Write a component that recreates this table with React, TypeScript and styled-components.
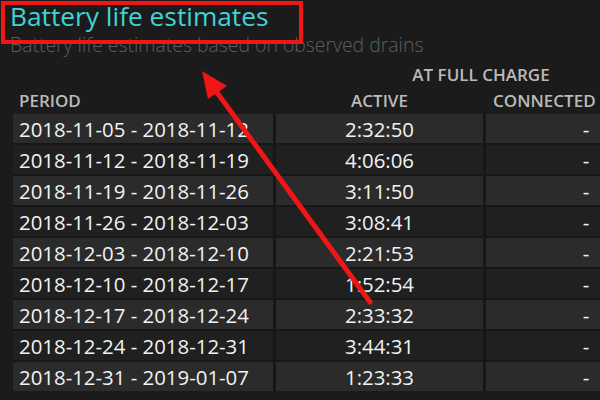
import React from "react";
import styled, { createGlobalStyle } from "styled-components";

const Global = createGlobalStyle`
  html, body { margin: 0; padding: 0; background: #1b1b1b; }
  body { width: 600px; height: 400px; overflow: hidden; font-family: "Open Sans", "Noto Sans", sans-serif; }
`;

const Page = styled.div`
  position: relative;
  width: 600px;
  height: 400px;
  overflow: hidden;
  background: #1b1b1b;
`;

const Title = styled.h1`
  margin: 0;
  padding-left: 10px;
  font-size: 26.3px;
  font-weight: 400;
  line-height: 32px;
  color: #3fd3d6;
  white-space: nowrap;
`;

const Subtitle = styled.div`
  margin-top: 2px;
  padding-left: 10px;
  font-size: 19.4px;
  font-weight: 300;
  line-height: 22px;
  color: #5e5e5e;
  white-space: nowrap;
`;

const Table = styled.div`
  margin-top: 6px;
  margin-left: 13px;
  display: grid;
  grid-template-columns: 260px 207px 200px;
  column-gap: 3px;
  width: 673px;
`;

const GroupHead = styled.div`
  grid-column: 2 / span 2;
  text-align: center;
  font-size: 17px;
  font-weight: 600;
  line-height: 26px;
  color: #bababa;
  white-space: nowrap;
`;

const Head = styled.div<{ $align: "left" | "center"; $pad?: number }>`
  text-align: ${(p) => p.$align};
  padding-left: ${(p) => p.$pad ?? 0}px;
  font-size: 17px;
  font-weight: 600;
  line-height: 26px;
  color: #bababa;
  white-space: nowrap;
`;

const Spacer = styled.div``;

const Body = styled.div`
  grid-column: 1 / span 3;
  display: grid;
  grid-template-columns: 260px 207px 200px;
  column-gap: 3px;
  row-gap: 2px;
  background: #171717;
`;

const Cell = styled.div<{ $light: boolean; $align: "left" | "center" }>`
  height: 29px;
  box-sizing: border-box;
  padding-top: 1px;
  padding-left: ${(p) => (p.$align === "left" ? "6px" : "0")};
  text-align: ${(p) => p.$align};
  background: ${(p) => (p.$light ? "#2b2b2b" : "#202020")};
  font-size: 20.4px;
  line-height: 28px;
  color: #f2f2f2;
  white-space: nowrap;
`;

const Overlay = styled.svg`
  position: absolute;
  left: 0;
  top: 0;
  pointer-events: none;
`;

const Highlight = styled.div`
  position: absolute;
  left: 1px;
  top: 1px;
  width: 302px;
  height: 43px;
  box-sizing: border-box;
  border: 4px solid #f01616;
  pointer-events: none;
`;

const rows: [string, string][] = [
  ["2018-11-05 - 2018-11-12", "2:32:50"],
  ["2018-11-12 - 2018-11-19", "4:06:06"],
  ["2018-11-19 - 2018-11-26", "3:11:50"],
  ["2018-11-26 - 2018-12-03", "3:08:41"],
  ["2018-12-03 - 2018-12-10", "2:21:53"],
  ["2018-12-10 - 2018-12-17", "1:52:54"],
  ["2018-12-17 - 2018-12-24", "2:33:32"],
  ["2018-12-24 - 2018-12-31", "3:44:31"],
  ["2018-12-31 - 2019-01-07", "1:23:33"],
];

export default function App() {
  return (
    <Page>
      <Global />
      <Title>Battery life estimates</Title>
      <Subtitle>Battery life estimates based on observed drains</Subtitle>
      <Table>
        <Spacer />
        <GroupHead>AT FULL CHARGE</GroupHead>
        <Head $align="left" $pad={6}>PERIOD</Head>
        <Head $align="center">ACTIVE</Head>
        <Head $align="left" $pad={7}>CONNECTED</Head>
        <Body>
          {rows.map(([period, active], i) => (
            <React.Fragment key={period}>
              <Cell $light={i % 2 === 0} $align="left">{period}</Cell>
              <Cell $light={i % 2 === 0} $align="center">{active}</Cell>
              <Cell $light={i % 2 === 0} $align="center">-</Cell>
            </React.Fragment>
          ))}
        </Body>
      </Table>
      <Highlight />
      <Overlay width="600" height="400" viewBox="0 0 600 400">
        <line x1="370" y1="302" x2="213" y2="87" stroke="#f01616" strokeWidth="5" strokeLinecap="round" />
        <polygon points="202,71 227,86 208,99" fill="#f01616" />
      </Overlay>
    </Page>
  );
}
